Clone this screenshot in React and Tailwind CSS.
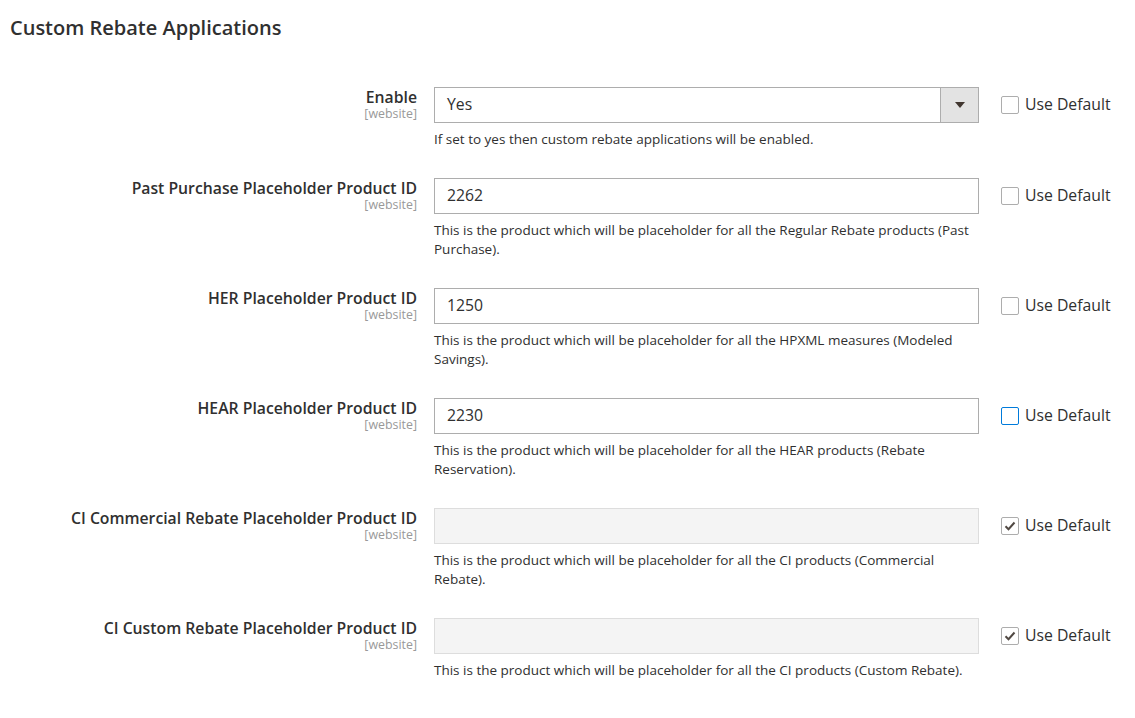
import React from "react";

const rows = [
  { label: "Enable", type: "select", value: "Yes", note: ["If set to yes then custom rebate applications will be enabled."], cb: "empty" },
  { label: "Past Purchase Placeholder Product ID", value: "2262", note: ["This is the product which will be placeholder for all the Regular Rebate products (Past", "Purchase)."], cb: "empty" },
  { label: "HER Placeholder Product ID", value: "1250", note: ["This is the product which will be placeholder for all the HPXML measures (Modeled", "Savings)."], cb: "empty" },
  { label: "HEAR Placeholder Product ID", value: "2230", note: ["This is the product which will be placeholder for all the HEAR products (Rebate", "Reservation)."], cb: "focus" },
  { label: "CI Commercial Rebate Placeholder Product ID", value: "", disabled: true, note: ["This is the product which will be placeholder for all the CI products (Commercial", "Rebate)."], cb: "checked" },
  { label: "CI Custom Rebate Placeholder Product ID", value: "", disabled: true, note: ["This is the product which will be placeholder for all the CI products (Custom Rebate)."], cb: "checked" },
];

function Checkbox({ state }) {
  const border = state === "focus" ? "border-[#007bdb]" : "border-[#adadad]";
  return (
    <span className={`w-[18px] h-[18px] border ${border} rounded-[2px] bg-white flex items-center justify-center`}>
      {state === "checked" && (
        <svg width="12" height="10" viewBox="0 0 12 10">
          <path d="M1.5 5.2 L4.5 8.2 L10.5 1.5" fill="none" stroke="#514943" strokeWidth="2" />
        </svg>
      )}
    </span>
  );
}

export default function App() {
  return (
    <div className="w-[1135px] h-[718px] bg-white text-[#303030]" style={{ fontFamily: '"Open Sans", sans-serif' }}>
      <div className="pl-[10px] pt-[14px]">
        <h2 className="text-[20px] font-semibold leading-[28px] text-[#303030]">Custom Rebate Applications</h2>
      </div>
      <div className="pt-[45px]">
        {rows.map((r, i) => (
          <div key={i} className="flex items-start pb-[29px]">
            <div className="w-[417px] text-right">
              <div className="text-[15.75px] font-semibold leading-[20px] text-[#303030]">{r.label}</div>
              <div className="text-[12.4px] leading-[14px] text-[#999999]">[website]</div>
            </div>
            <div className="ml-[17px] w-[545px]">
              {r.type === "select" ? (
                <div className="h-[36px] border border-[#adadad] flex items-center bg-white">
                  <span className="flex-1 pl-[12px] text-[15.75px] text-[#303030]">{r.value}</span>
                  <span className="w-[38px] h-full bg-[#e3e3e3] border-l border-[#adadad] flex items-center justify-center">
                    <svg width="10" height="6" viewBox="0 0 10 6"><path d="M0 0 L10 0 L5 6 Z" fill="#41362f" /></svg>
                  </span>
                </div>
              ) : (
                <div className={`h-[36px] border flex items-center pl-[12px] text-[15.75px] text-[#303030] ${r.disabled ? "bg-[#f4f4f4] border-[#dddddd]" : "bg-white border-[#adadad]"}`}>
                  {r.value}
                </div>
              )}
              <div className="mt-[7px] text-[13.5px] leading-[19px] text-[#303030]">
                {r.note.map((n, j) => (
                  <div key={j}>{n}</div>
                ))}
              </div>
            </div>
            <label className="ml-[22px] h-[36px] flex items-center gap-[6px]">
              <Checkbox state={r.cb} />
              <span className="text-[15.75px] text-[#303030]">Use Default</span>
            </label>
          </div>
        ))}
      </div>
    </div>
  );
}
